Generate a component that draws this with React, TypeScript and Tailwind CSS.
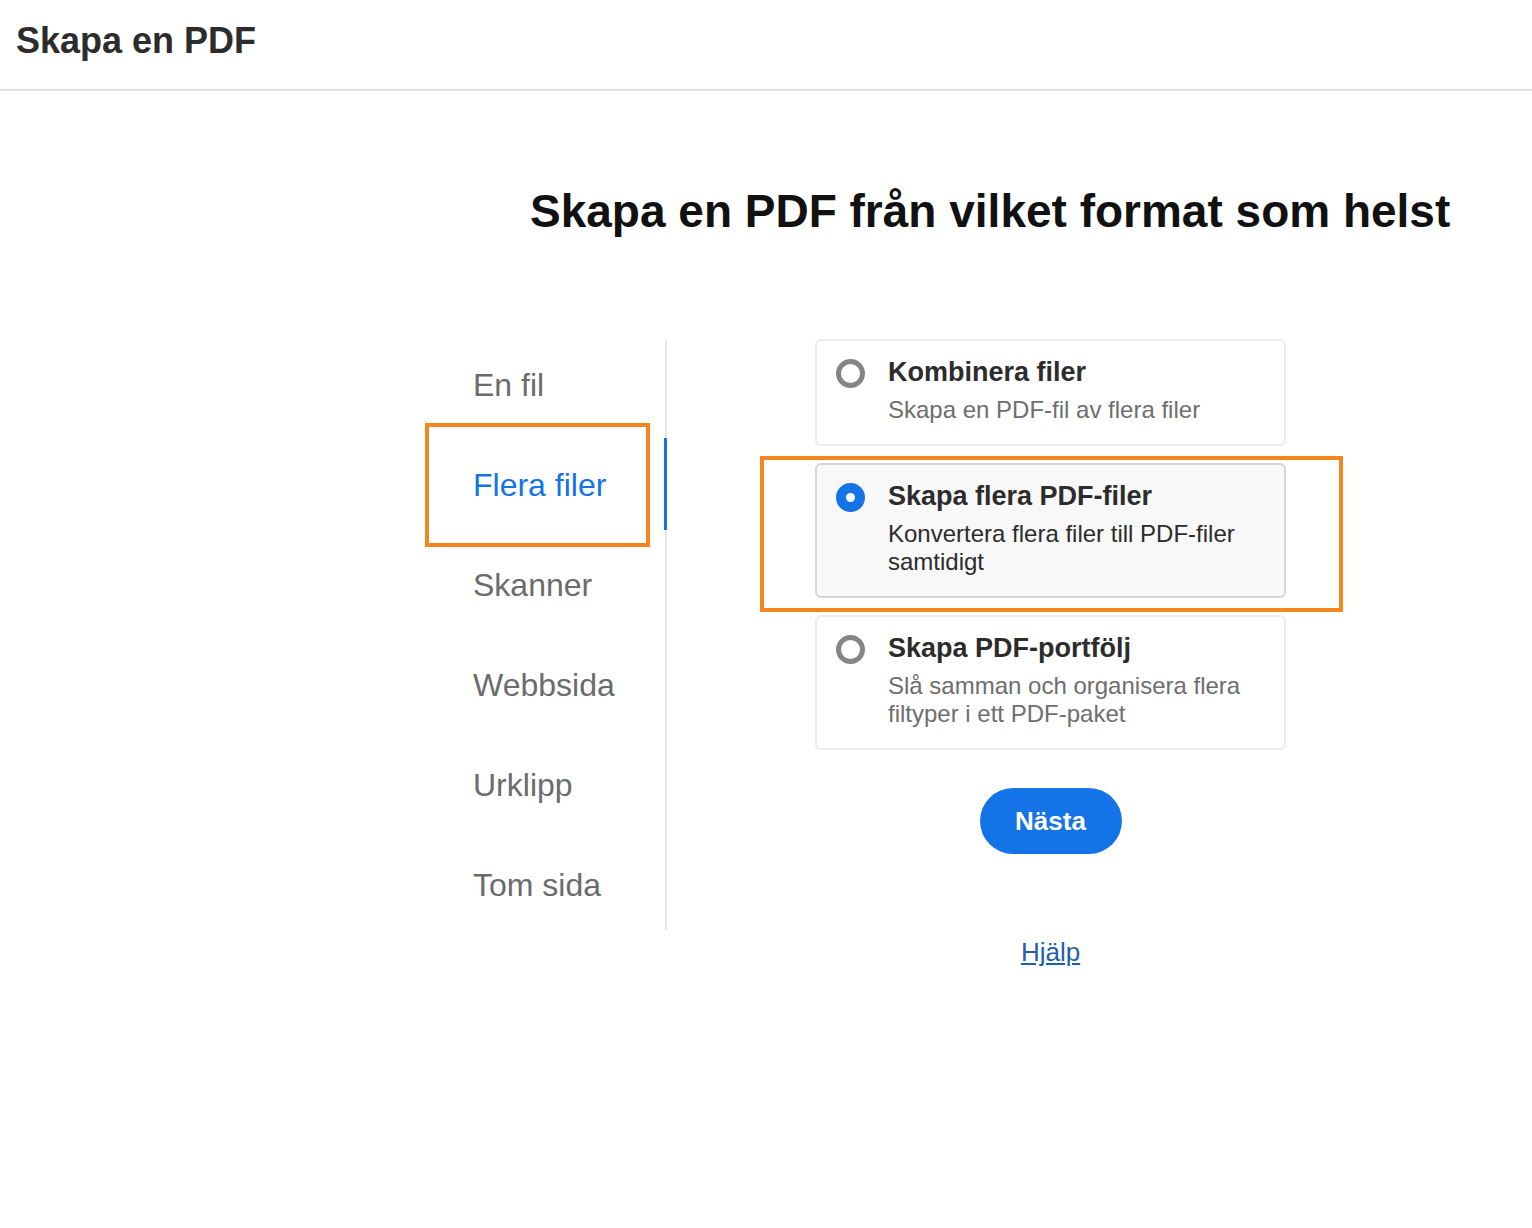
import { useState } from "react";

const navItems = ["En fil", "Flera filer", "Skanner", "Webbsida", "Urklipp", "Tom sida"];

const options = [
  { title: "Kombinera filer", desc: "Skapa en PDF-fil av flera filer" },
  { title: "Skapa flera PDF-filer", desc: "Konvertera flera filer till PDF-filer samtidigt" },
  { title: "Skapa PDF-portfölj", desc: "Slå samman och organisera flera filtyper i ett PDF-paket" },
];

export default function App() {
  const [active, setActive] = useState(1);
  const [selected, setSelected] = useState(1);

  return (
    <main className="min-h-screen bg-white font-['Liberation_Sans',Arial,sans-serif]">
      {/* Header */}
      <header className="h-[91px] border-b-2 border-[#e4e4e4] px-4 pt-[19px]">
        <h1 className="text-[36px] leading-[1.2] font-bold text-[#2c2c2c]">Skapa en PDF</h1>
      </header>

      <h2 className="ml-[530px] mt-[93px] text-[46px] leading-[1.2] font-bold text-[#111]">
        Skapa en PDF från vilket format som helst
      </h2>

      <div className="ml-[425px] mt-[96px] flex items-start">
        {/* Left nav */}
        <nav className="mt-[5px] w-[242px] border-r-2 border-[#e8e8e8] h-[590px]">
          {navItems.map((item, i) => (
            <div
              key={item}
              onClick={() => setActive(i)}
              className={`relative flex items-center pl-[48px] text-[32px] cursor-pointer ${
                i === 0 ? "h-[95px] pb-[5px]" : "h-[100px]"
              } ${i === active ? "text-[#1473e6]" : "text-[#6b6b6b]"}`}
            >
              {item}
              {i === active && (
                <>
                  <span className="absolute right-[-2px] top-[3px] h-[92px] w-[3px] bg-[#1473e6]" />
                  <span className="absolute left-0 top-[-12px] h-[124px] w-[225px] border-4 border-[#f5851f]" />
                </>
              )}
            </div>
          ))}
        </nav>

        {/* Right column */}
        <div className="ml-[148px] w-[471px] flex flex-col">
          <div className="flex flex-col gap-[17px] pt-[4px]">
            {options.map((o, i) => {
              const isSel = i === selected;
              return (
                <div
                  key={o.title}
                  onClick={() => setSelected(i)}
                  className={`relative flex gap-[23px] rounded-md border-2 pl-[19px] pr-6 pt-[14px] pb-[20px] cursor-pointer ${
                    isSel ? "bg-[#f8f8f8] border-[#d6d6d6]" : "bg-white border-[#ececec]"
                  }`}
                >
                  <div className="pt-[4px] shrink-0">
                    {isSel ? (
                      <div className="h-[29px] w-[29px] rounded-full bg-[#1473e6] flex items-center justify-center">
                        <div className="h-[9px] w-[9px] rounded-full bg-white" />
                      </div>
                    ) : (
                      <div className="h-[29px] w-[29px] rounded-full border-[5px] border-[#858585]" />
                    )}
                  </div>
                  <div>
                    <div className="text-[27px] leading-[34px] font-bold text-[#2c2c2c]">{o.title}</div>
                    <div
                      className={`mt-[7px] text-[24px] leading-[28px] ${
                        isSel ? "text-[#2c2c2c]" : "text-[#6e6e6e]"
                      }`}
                    >
                      {o.desc}
                    </div>
                  </div>
                  {isSel && (
                    <span className="absolute left-[-57px] top-[-9px] right-[-59px] bottom-[-16px] border-4 border-[#f5851f] pointer-events-none" />
                  )}
                </div>
              );
            })}
          </div>

          <button className="self-center mt-[38px] h-[66px] w-[142px] rounded-full bg-[#1473e6] text-white text-[26px] font-bold">
            Nästa
          </button>

          <a href="#" className="self-center mt-[79px] text-[26px] text-[#1d5fae] underline">
            Hjälp
          </a>
        </div>
      </div>
    </main>
  );
}
